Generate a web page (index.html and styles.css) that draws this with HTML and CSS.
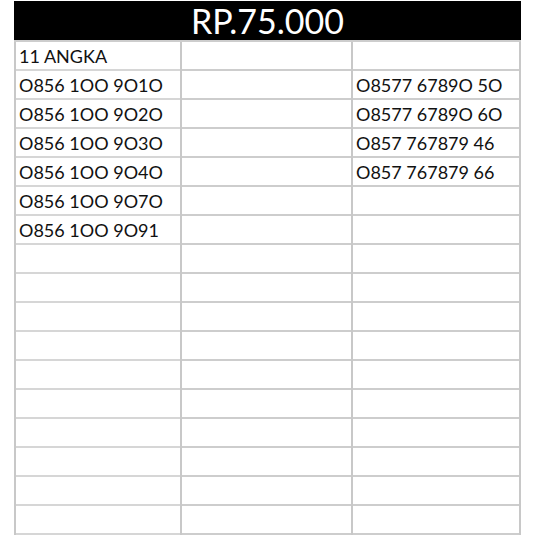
FILE: index.html
```html
<!DOCTYPE html>
<html>
<head>
<meta charset="utf-8">
<link rel="stylesheet" href="styles.css">
</head>
<body>
<div class="sheet">
  <div class="title">RP.75.000</div>
  <div class="grid">
    <div class="col col-a">
      <div class="cell">11 ANGKA</div>
      <div class="cell">O856 1OO 9O1O</div>
      <div class="cell">O856 1OO 9O2O</div>
      <div class="cell">O856 1OO 9O3O</div>
      <div class="cell">O856 1OO 9O4O</div>
      <div class="cell">O856 1OO 9O7O</div>
      <div class="cell">O856 1OO 9O91</div>
      <div class="cell"></div><div class="cell"></div><div class="cell"></div><div class="cell"></div><div class="cell"></div>
      <div class="cell"></div><div class="cell"></div><div class="cell"></div><div class="cell"></div><div class="cell"></div>
    </div>
    <div class="col col-b">
      <div class="cell"></div><div class="cell"></div><div class="cell"></div><div class="cell"></div><div class="cell"></div>
      <div class="cell"></div><div class="cell"></div><div class="cell"></div><div class="cell"></div><div class="cell"></div>
      <div class="cell"></div><div class="cell"></div><div class="cell"></div><div class="cell"></div><div class="cell"></div>
      <div class="cell"></div><div class="cell"></div>
    </div>
    <div class="col col-c">
      <div class="cell"></div>
      <div class="cell">O8577 6789O 5O</div>
      <div class="cell">O8577 6789O 6O</div>
      <div class="cell">O857 767879 46</div>
      <div class="cell">O857 767879 66</div>
      <div class="cell"></div><div class="cell"></div><div class="cell"></div><div class="cell"></div><div class="cell"></div>
      <div class="cell"></div><div class="cell"></div><div class="cell"></div><div class="cell"></div><div class="cell"></div>
      <div class="cell"></div><div class="cell"></div>
    </div>
  </div>
</div>
</body>
</html>
```
FILE: styles.css
```css
html, body {
  margin: 0;
  padding: 0;
  background: #fff;
}
.sheet {
  width: 507px;
  margin: 1px 0 0 14px;
  font-family: Lato, "Liberation Sans", sans-serif;
  color: #111;
}
.title {
  height: 39px;
  background: #000;
  color: #fff;
  font-size: 34px;
  line-height: 39px;
  text-align: center;
}
.grid {
  display: grid;
  grid-template-columns: 166px 171px 170px;
  border-top: 2px solid #cdcdcd;
}
.col {
  border-left: 2px solid #c8c8c8;
}
.col-c {
  border-right: 2px solid #c8c8c8;
}
.cell {
  box-sizing: border-box;
  height: 29px;
  border-bottom: 2px solid #cdcdcd;
  padding: 0 0 0 3px;
  font-size: 18px;
  line-height: 29px;
  white-space: nowrap;
}
.col-a .cell {
  border-bottom-color: #d6d6d6;
}
```
